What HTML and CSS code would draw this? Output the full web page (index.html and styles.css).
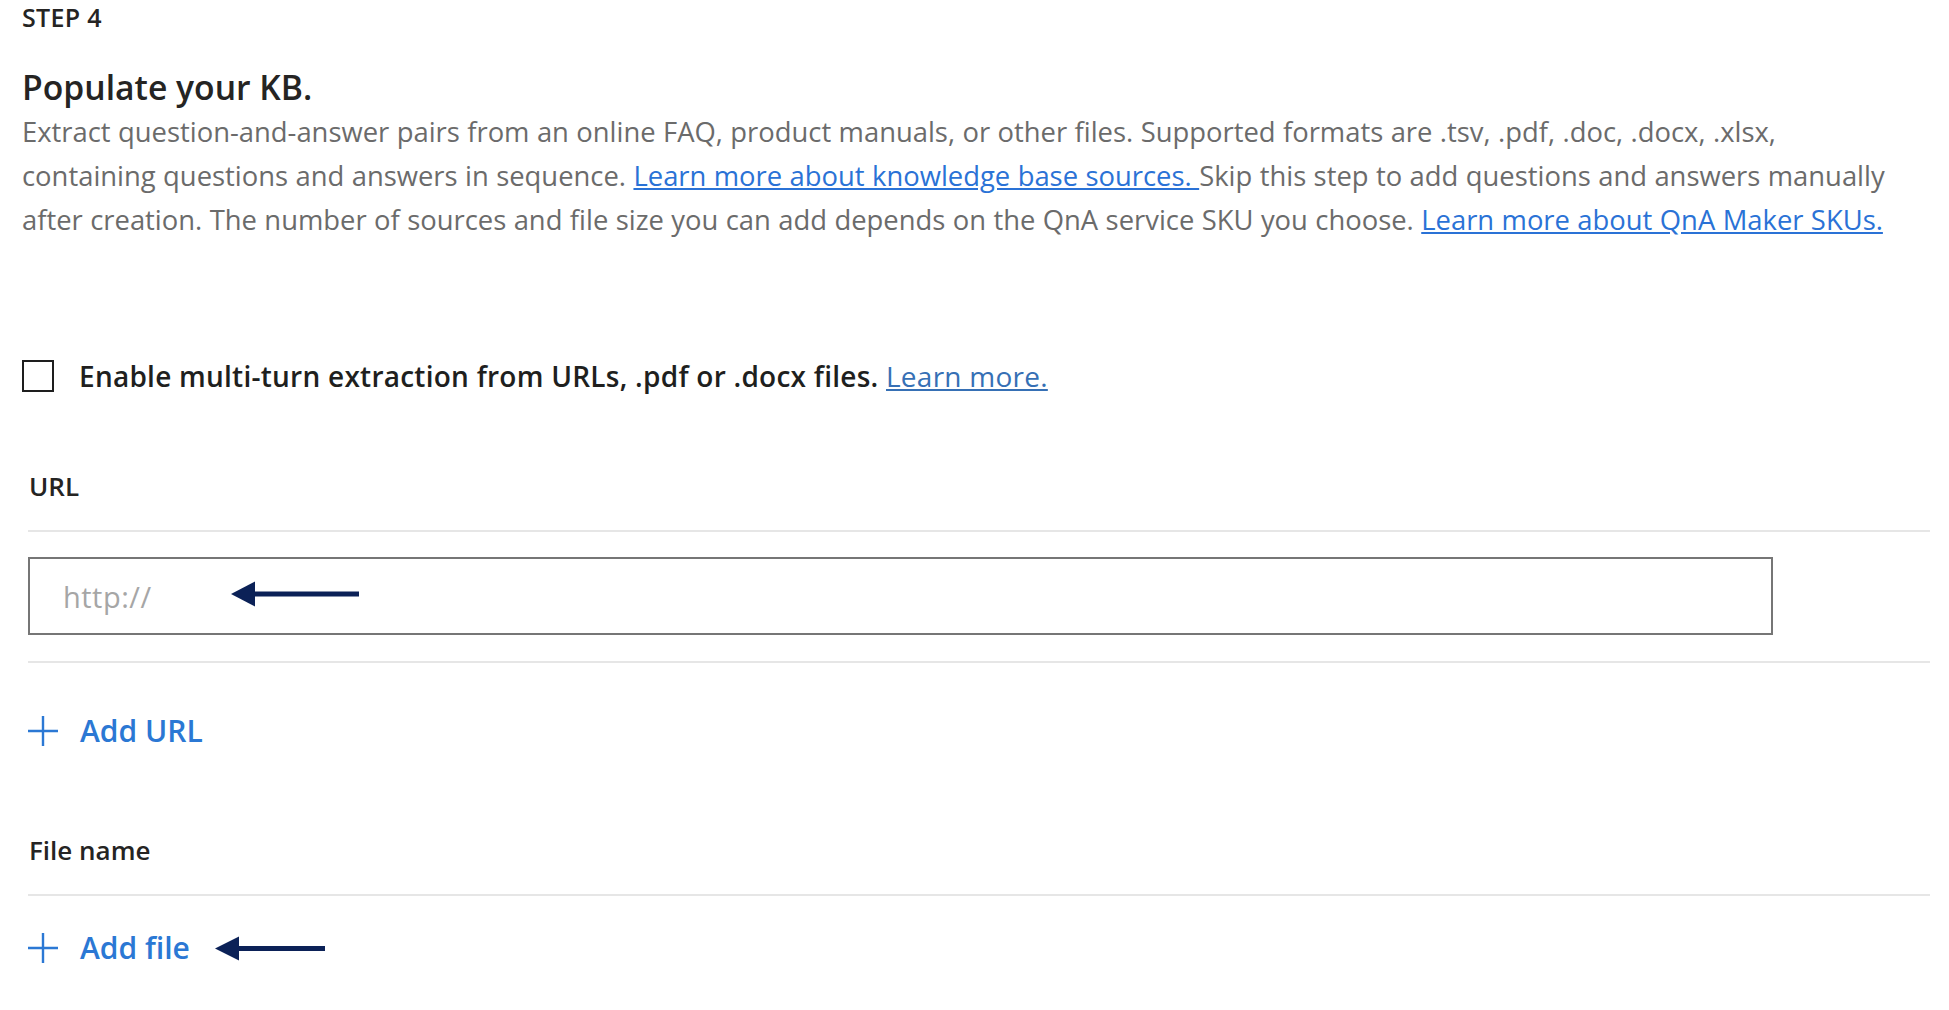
FILE: index.html
```html
<!DOCTYPE html>
<html lang="en">
<head>
<meta charset="utf-8">
<title>Populate your KB</title>
<link rel="stylesheet" href="styles.css">
</head>
<body>
<main class="page">
  <div class="step">STEP 4</div>
  <h1 class="title">Populate your KB.</h1>
  <p class="desc">Extract question-and-answer pairs from an online FAQ, product manuals, or other files. Supported formats are .tsv, .pdf, .doc, .docx, .xlsx,<br>containing questions and answers in sequence. <a href="#">Learn more about knowledge base sources. </a>Skip this step to add questions and answers manually<br>after creation. The number of sources and file size you can add depends on the QnA service SKU you choose. <a href="#">Learn more about QnA Maker SKUs.</a></p>

  <label class="check-row">
    <span class="checkbox"></span>
    <span class="check-label">Enable multi-turn extraction from URLs, .pdf or .docx files. <a href="#">Learn more.</a></span>
  </label>

  <section class="sources">
    <div class="field-label">URL</div>
    <div class="url-row">
      <div class="url-input">
        <span class="placeholder">http://</span>
        <svg class="url-arrow" width="128" height="26" viewBox="0 0 128 26" aria-hidden="true">
          <path d="M0 13 L24 0.5 L24 25.5 Z" fill="#0b2157"/>
          <rect x="22" y="10.5" width="106" height="5" fill="#0b2157"/>
        </svg>
      </div>
    </div>
    <button class="add-btn add-url" type="button">
      <svg width="30" height="30" viewBox="0 0 30 30" aria-hidden="true"><path d="M15 0V30M0 15H30" stroke="#2b78d4" stroke-width="2.4" fill="none"/></svg>
      <span>Add URL</span>
    </button>

    <div class="field-label file-label">File name</div>
    <div class="file-row">
      <button class="add-btn" type="button">
        <svg width="30" height="30" viewBox="0 0 30 30" aria-hidden="true"><path d="M15 0V30M0 15H30" stroke="#2b78d4" stroke-width="2.4" fill="none"/></svg>
        <span>Add file</span>
      </button>
      <svg class="file-arrow" width="110" height="25" viewBox="0 0 110 25" aria-hidden="true">
        <path d="M0 12.5 L24 0.5 L24 24.5 Z" fill="#0b2157"/>
        <rect x="22" y="10" width="88" height="5" fill="#0b2157"/>
      </svg>
    </div>
  </section>
</main>
</body>
</html>
```

FILE: styles.css
```css
html, body {
  margin: 0;
  background: #ffffff;
}

body {
  font-family: "Open Sans", "Noto Sans", sans-serif;
  color: #252423;
}

.page {
  padding: 0 19px 0 22px;
}

.step {
  font-size: 25px;
  font-weight: 600;
  letter-spacing: 0.3px;
  line-height: 34px;
  color: #252423;
}

.title {
  margin: 30px 0 0;
  font-size: 33.7px;
  font-weight: 600;
  line-height: 46px;
  color: #252423;
}

.desc {
  margin: 0;
  font-size: 27.4px;
  line-height: 44px;
  word-spacing: 0.3px;
  color: #6b6b6b;
}

.desc a {
  color: #2a72d6;
  text-decoration: underline;
}

.check-row {
  display: flex;
  align-items: center;
  gap: 25px;
  margin-top: 118px;
}

.checkbox {
  width: 32px;
  height: 32px;
  box-sizing: border-box;
  border: 2px solid #1e1e1e;
  flex: none;
}

.check-label {
  font-size: 28px;
  font-weight: 600;
  letter-spacing: 0.25px;
  line-height: 32px;
  color: #201f1e;
}

.check-label a {
  font-weight: 400;
  color: #3670b5;
  text-decoration: underline;
}

.sources {
  margin: 76px 0 0 6px;
}

.field-label {
  font-size: 26px;
  font-weight: 600;
  line-height: 36px;
  color: #252423;
  padding: 0 0 26px 1px;
  border-bottom: 2px solid #e6e6e6;
}

.url-row {
  padding: 25px 0 26px;
  border-bottom: 2px solid #e6e6e6;
}

.url-input {
  position: relative;
  width: 1745px;
  height: 78px;
  box-sizing: border-box;
  border: 2px solid #767676;
  display: flex;
  align-items: center;
  padding-left: 33px;
}

.placeholder {
  font-size: 29px;
  letter-spacing: 0.5px;
  color: #a6a6a6;
}

.url-arrow {
  position: absolute;
  left: 201px;
  top: 22px;
}

.add-btn {
  display: flex;
  align-items: center;
  gap: 22px;
  height: 40px;
  padding: 0;
  border: 0;
  background: none;
  font-family: inherit;
  font-size: 30px;
  font-weight: 600;
  line-height: 40px;
  color: #2b78d4;
  cursor: pointer;
}

.add-btn svg {
  flex: none;
}

.add-url {
  margin-top: 48px;
}

.file-label {
  margin-top: 81px;
}

.file-row {
  display: flex;
  align-items: center;
  margin-top: 32px;
}

.file-arrow {
  margin-left: 25px;
  flex: none;
}
```
